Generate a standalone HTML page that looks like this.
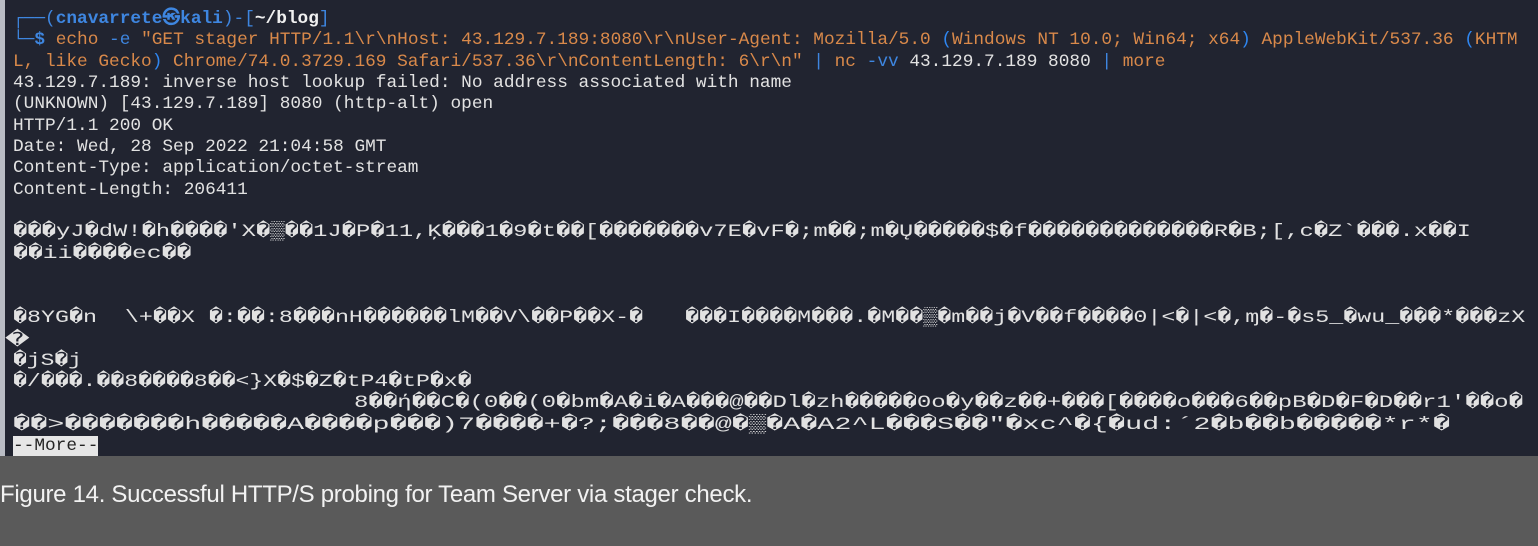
<!DOCTYPE html>
<html><head><meta charset="utf-8"><style>
html,body{margin:0;padding:0;width:1538px;height:546px;overflow:hidden;background:#5a5a5a}
#term{position:absolute;left:0;top:0;width:1538px;height:456px;background:#212430;border-left:5px solid #b9bcc4;box-sizing:border-box;overflow:hidden}
pre{position:absolute;left:8px;top:9px;width:3000px;margin:0;font-family:"Liberation Mono","DejaVu Sans Mono",monospace;font-size:17.8px;line-height:21.35px;color:#e2e2e2;white-space:pre}
.s{display:inline-block;transform-origin:0 50%;vertical-align:top;height:21.35px;line-height:21.35px;white-space:pre}
.b{color:#3e86e0}.bb{color:#3e86e0;font-weight:bold}.w{color:#f0f0f0;font-weight:bold}.o{color:#d9894a}.bl{color:#2f86f0}
.more{background:#e6e6e6;color:#222}
#one{position:absolute;left:0px;top:329px;font-family:"DejaVu Sans","Liberation Mono",sans-serif;font-size:17.8px;line-height:21px;color:#e2e2e2;transform:scaleX(1.35);transform-origin:0 50%}
#cap{position:absolute;left:0;top:481px;font-family:"Liberation Sans",sans-serif;font-size:24px;color:#f2f2f2;letter-spacing:-0.3px}
</style></head><body>
<div id="term"><pre><span class="b">┌──(</span><span class="bb">cnavarrete㉿kali</span><span class="b">)-[</span><span class="w">~/blog</span><span class="b">]</span>
<span class="b">└─</span><span class="bb">$</span> <span class="o">echo</span> <span class="b">-e</span> <span class="o">"GET stager HTTP/1.1\r\nHost: 43.129.7.189:8080\r\nUser-Agent: Mozilla/5.0 </span><span class="bl">(</span><span class="o">Windows NT 10.0; Win64; x64</span><span class="bl">)</span><span class="o"> AppleWebKit/537.36 </span><span class="bl">(</span><span class="o">KHTM</span>
<span class="o">L, like Gecko</span><span class="bl">)</span><span class="o"> Chrome/74.0.3729.169 Safari/537.36\r\nContentLength: 6\r\n"</span> <span class="b">|</span> <span class="o">nc</span> <span class="b">-vv</span> 43.129.7.189 8080 <span class="b">|</span> <span class="o">more</span>
43.129.7.189: inverse host lookup failed: No address associated with name
(UNKNOWN) [43.129.7.189] 8080 (http-alt) open
HTTP/1.1 200 OK
Date: Wed, 28 Sep 2022 21:04:58 GMT
Content-Type: application/octet-stream
Content-Length: 206411

<span class="s" style="transform:scaleX(1.337)">���yJ�dW!�h����'X�▒��1J�P�11,Ķ���1�9�t��[�������v7E�vF�;m��;m�Ų�����$�f�������������R�B;[,c�Z`���.x��I</span>
<span class="s" style="transform:scaleX(1.39)">��ii����ec��</span>


<span class="s" style="transform:scaleX(1.31)">�8YG�n  \+��X �:��:8���nH������lM��V\��P��X-�   ���I����M���.�M��▒�m��j�V��f����0|&lt;�|&lt;�,ɱ�-�s5_�wu_���*���zX</span>

<span class="s" style="transform:scaleX(1.29)">�jS�j</span>
<span class="s" style="transform:scaleX(1.30)">�/���.��8����8��&lt;}X�$�Z�tP4�tP�x�</span>
                                <span class="s" style="transform:scaleX(1.35)">8��ή��C�(0��(0�bm�A�i�A���@��Dl�zh�����0o�y��z��+���[����o���6��pB�D�F�D��r1'��o�</span>
<span class="s" style="transform:scaleX(1.6)">��&gt;�������h�����A����p���)7����+�?;���8��@�▒�A�A2^L���S��"�xc^�{�ud:´2�b��b�����*r*�</span>
<span class="more">--More--</span></pre><div id="one">�</div></div>
<div id="cap">Figure 14. Successful HTTP/S probing for Team Server via stager check.</div>
</body></html>
